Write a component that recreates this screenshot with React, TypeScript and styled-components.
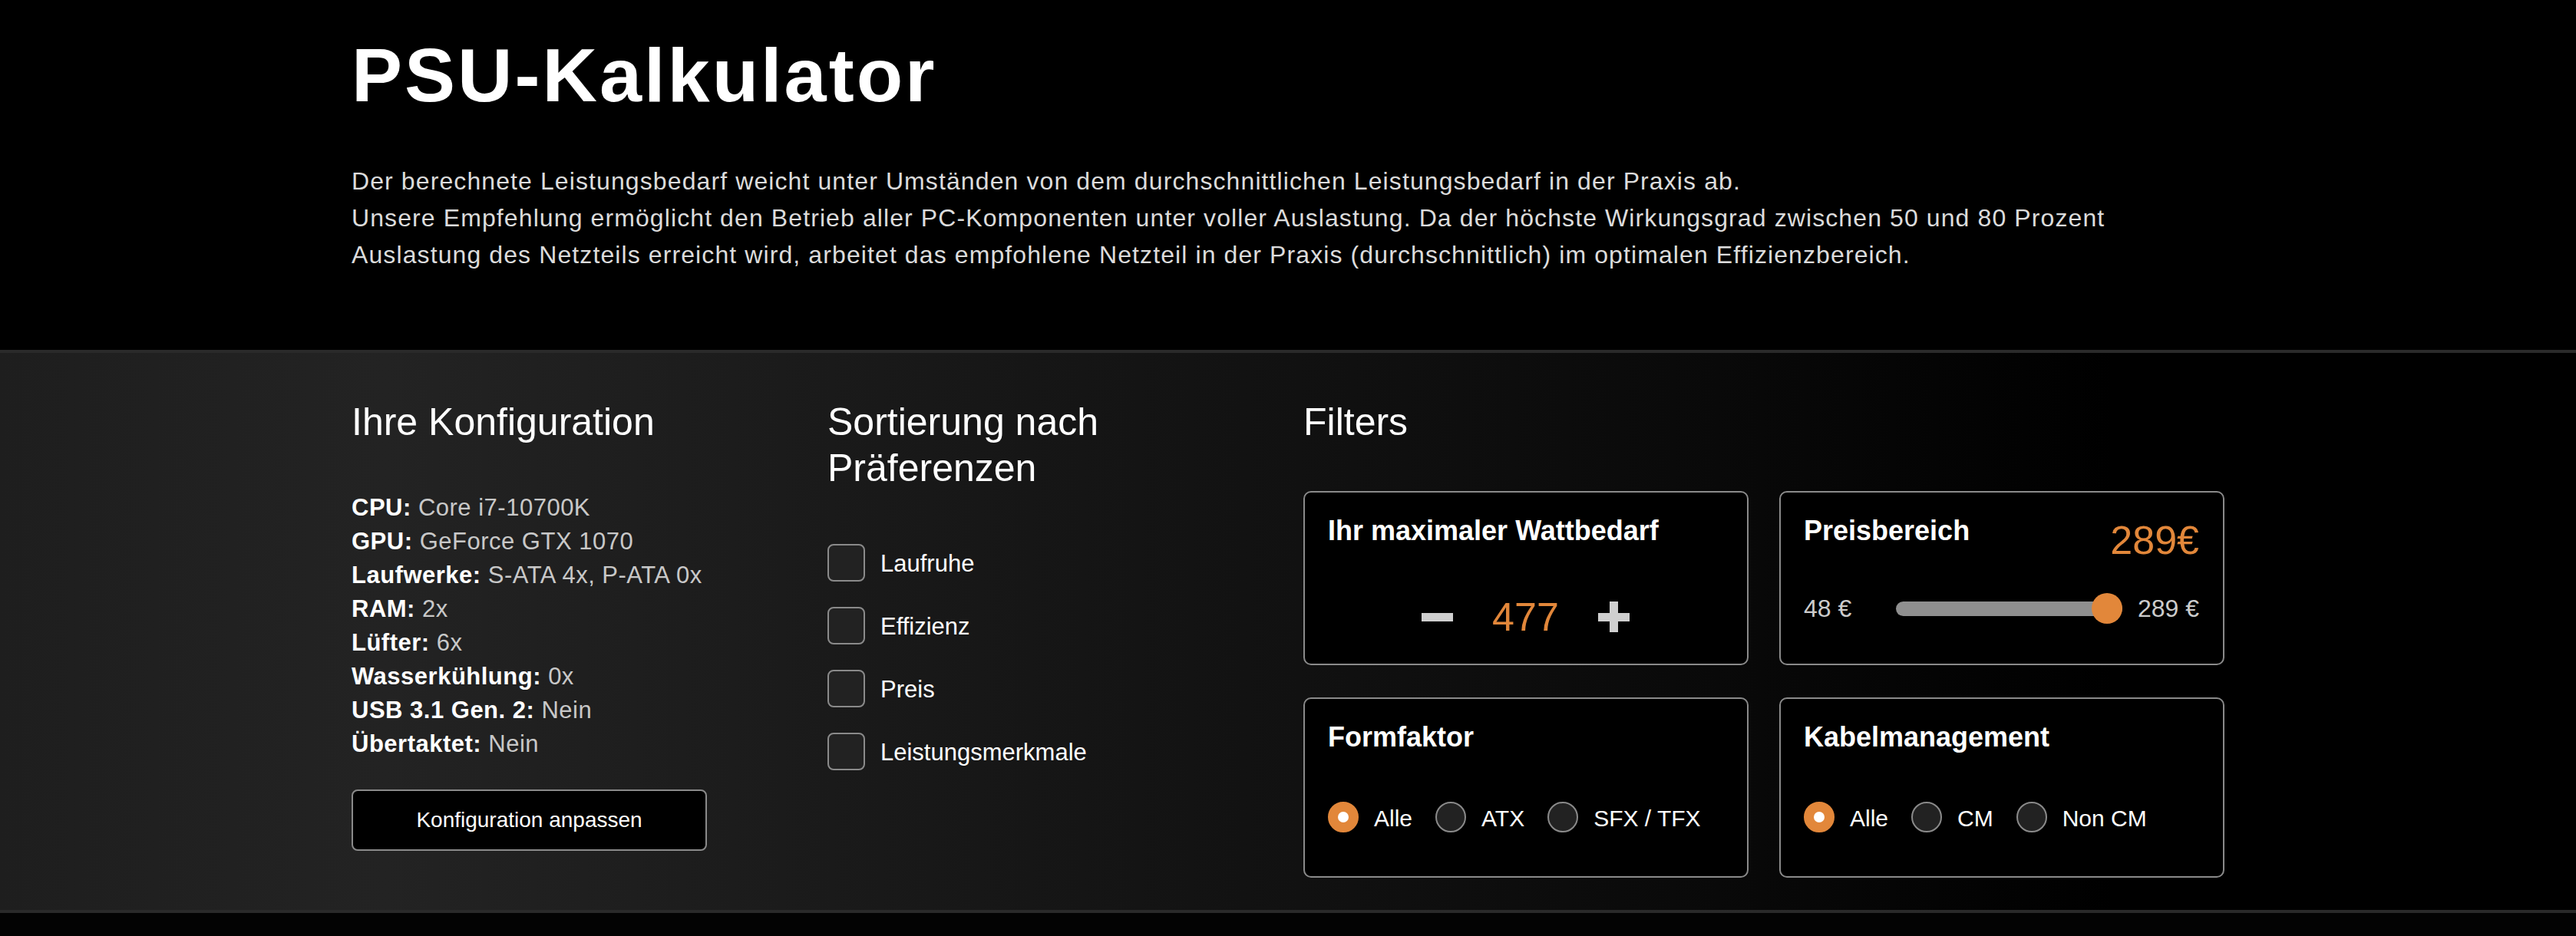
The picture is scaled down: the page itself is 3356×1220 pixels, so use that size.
import styled, { createGlobalStyle } from "styled-components";

const ORANGE = "#e2873a";

const SPECS = [
	{ label: "CPU:", value: "Core i7-10700K" },
	{ label: "GPU:", value: "GeForce GTX 1070" },
	{ label: "Laufwerke:", value: "S-ATA 4x, P-ATA 0x" },
	{ label: "RAM:", value: "2x" },
	{ label: "Lüfter:", value: "6x" },
	{ label: "Wasserkühlung:", value: "0x" },
	{ label: "USB 3.1 Gen. 2:", value: "Nein" },
	{ label: "Übertaktet:", value: "Nein" }
];

const SORT_OPTIONS = ["Laufruhe", "Effizienz", "Preis", "Leistungsmerkmale"];

interface RadioGroupProps {
	options: string[];
	selected: string;
}

function RadioGroup({ options, selected }: RadioGroupProps) {
	return (
		<RadioRow>
			{options.map((option) => (
				<RadioItem key={option}>
					<RadioDot $checked={option === selected} />
					<RadioLabel>{option}</RadioLabel>
				</RadioItem>
			))}
		</RadioRow>
	);
}

export default function App() {
	return (
		<>
			<GlobalStyle />
			<Intro>
				<Container>
					<Title>PSU-Kalkulator</Title>
					<Lead>
						Der berechnete Leistungsbedarf weicht unter Umständen von dem
						durchschnittlichen Leistungsbedarf in der Praxis ab.
						<br />
						Unsere Empfehlung ermöglicht den Betrieb aller PC-Komponenten unter
						voller Auslastung. Da der höchste Wirkungsgrad zwischen 50 und 80
						Prozent
						<br />
						Auslastung des Netzteils erreicht wird, arbeitet das empfohlene
						Netzteil in der Praxis (durchschnittlich) im optimalen
						Effizienzbereich.
					</Lead>
				</Container>
			</Intro>

			<Panel>
				<PanelGrid>
					<Column>
						<Heading>Ihre Konfiguration</Heading>
						<SpecList>
							{SPECS.map((spec) => (
								<SpecLine key={spec.label}>
									<SpecLabel>{spec.label}</SpecLabel> {spec.value}
								</SpecLine>
							))}
						</SpecList>
						<OutlineButton type="button">Konfiguration anpassen</OutlineButton>
					</Column>

					<Column>
						<Heading>Sortierung nach Präferenzen</Heading>
						<CheckList>
							{SORT_OPTIONS.map((option) => (
								<CheckRow key={option}>
									<CheckBox />
									<CheckLabel>{option}</CheckLabel>
								</CheckRow>
							))}
						</CheckList>
					</Column>

					<FilterColumn>
						<Heading>Filters</Heading>
						<CardGrid>
							<Card>
								<CardTitle>Ihr maximaler Wattbedarf</CardTitle>
								<Stepper>
									<svg width="41" height="40" viewBox="0 0 41 40">
										<rect x="0" y="15" width="41" height="11" fill="#cfcfcf" />
									</svg>
									<StepValue>477</StepValue>
									<svg width="41" height="40" viewBox="0 0 41 40">
										<rect x="0" y="15" width="41" height="11" fill="#cfcfcf" />
										<rect x="15" y="0" width="11" height="40" fill="#cfcfcf" />
									</svg>
								</Stepper>
							</Card>

							<Card>
								<CardHeader>
									<CardTitle>Preisbereich</CardTitle>
									<Price>289€</Price>
								</CardHeader>
								<SliderRow>
									<SliderValue>48 €</SliderValue>
									<Track>
										<Thumb />
									</Track>
									<SliderValue>289 €</SliderValue>
								</SliderRow>
							</Card>

							<Card>
								<CardTitle>Formfaktor</CardTitle>
								<RadioGroup options={["Alle", "ATX", "SFX / TFX"]} selected="Alle" />
							</Card>

							<Card>
								<CardTitle>Kabelmanagement</CardTitle>
								<RadioGroup options={["Alle", "CM", "Non CM"]} selected="Alle" />
							</Card>
						</CardGrid>
					</FilterColumn>
				</PanelGrid>
			</Panel>
			<PageEnd />
		</>
	);
}

const GlobalStyle = createGlobalStyle`
	body {
		margin: 0;
		background: #000;
		color: #fff;
		font-family: "Liberation Sans", Arial, sans-serif;
	}
`;

const Container = styled.div`
	width: 2440px;
	margin: 0 auto;
`;

const Intro = styled.header`
	padding: 40px 0 100px;
	background: #000;
`;

const Title = styled.h1`
	margin: 0;
	font-size: 99px;
	line-height: 115px;
	font-weight: 700;
	letter-spacing: 3px;
	color: #fff;
`;

const Lead = styled.p`
	margin: 57px 0 0;
	font-size: 32px;
	line-height: 48px;
	letter-spacing: 1.1px;
	color: #dcdcdc;
`;

const Panel = styled.section`
	border-top: 4px solid #2a2a2a;
	border-bottom: 4px solid #2a2a2a;
	background: linear-gradient(
		90deg,
		#1e1e1e 0%,
		#232323 15%,
		#161616 40%,
		#0a0a0a 65%,
		#000 82%
	);
	padding: 60px 0 42px;
`;

const PanelGrid = styled(Container)`
	display: grid;
	grid-template-columns: repeat(4, 1fr);
	column-gap: 40px;
	align-items: start;
`;

const Column = styled.div`
	display: flex;
	flex-direction: column;
	align-items: flex-start;
`;

const FilterColumn = styled(Column)`
	grid-column: span 2;
	align-items: stretch;
`;

const Heading = styled.h2`
	margin: 0 0 60px;
	font-size: 50px;
	line-height: 60px;
	font-weight: 400;
	color: #fff;
`;

const SpecList = styled.div`
	display: flex;
	flex-direction: column;
`;

const SpecLine = styled.div`
	font-size: 31px;
	line-height: 44px;
	letter-spacing: 0.5px;
	color: #c8c8c8;
`;

const SpecLabel = styled.b`
	font-weight: 700;
	color: #fff;
`;

const OutlineButton = styled.button`
	margin-top: 37px;
	width: 463px;
	height: 80px;
	background: #000;
	border: 2px solid #8a8a8a;
	border-radius: 8px;
	color: #fff;
	font-family: inherit;
	font-size: 28px;
	cursor: pointer;
`;

const CheckList = styled.div`
	margin-top: 2px;
	display: flex;
	flex-direction: column;
	gap: 20px;
`;

const CheckRow = styled.label`
	display: flex;
	align-items: center;
	min-height: 62px;
	gap: 20px;
	cursor: pointer;
`;

const CheckBox = styled.span`
	box-sizing: border-box;
	width: 49px;
	height: 49px;
	border: 2px solid #8a8a8a;
	border-radius: 8px;
	background: #222;
`;

const CheckLabel = styled.span`
	font-size: 31px;
	padding-top: 3px;
	color: #fff;
`;

const CardGrid = styled.div`
	display: grid;
	grid-template-columns: 1fr 1fr;
	column-gap: 40px;
	row-gap: 42px;
`;

const Card = styled.div`
	box-sizing: border-box;
	background: #000;
	border: 2px solid #8a8a8a;
	border-radius: 10px;
	padding: 28px 31px 31px 30px;
`;

const CardHeader = styled.div`
	display: flex;
	justify-content: space-between;
	align-items: flex-start;
`;

const CardTitle = styled.h3`
	margin: 0;
	font-size: 36px;
	line-height: 44px;
	font-weight: 700;
	color: #fff;
`;

const Price = styled.span`
	font-size: 52px;
	line-height: 68px;
	color: ${ORANGE};
`;

const Stepper = styled.div`
	margin-top: 60px;
	height: 60px;
	display: flex;
	align-items: center;
	justify-content: center;
	gap: 51px;
`;

const StepValue = styled.span`
	font-size: 52px;
	line-height: 60px;
	color: ${ORANGE};
`;

const SliderRow = styled.div`
	margin-top: 35px;
	height: 40px;
	display: flex;
	align-items: center;
`;

const SliderValue = styled.span`
	font-size: 32px;
	color: #cccccc;
`;

const Track = styled.div`
	position: relative;
	flex: 1;
	height: 19px;
	margin: 0 20px 0 58px;
	border-radius: 10px;
	background: #8f8f8f;
`;

const Thumb = styled.span`
	position: absolute;
	right: 0;
	top: 50%;
	width: 40px;
	height: 40px;
	margin-top: -20px;
	border-radius: 50%;
	background: ${ORANGE};
`;

const RadioRow = styled.div`
	display: flex;
	align-items: center;
	gap: 30px;
	margin: 62px 0 26px;
	height: 40px;
`;

const RadioItem = styled.label`
	display: flex;
	align-items: center;
	gap: 20px;
	cursor: pointer;
`;

const RadioDot = styled.span<{ $checked: boolean }>`
	box-sizing: border-box;
	width: 40px;
	height: 40px;
	border-radius: 50%;
	display: flex;
	align-items: center;
	justify-content: center;
	background: ${(p) => (p.$checked ? ORANGE : "#222")};
	border: 2px solid ${(p) => (p.$checked ? ORANGE : "#8a8a8a")};

	&::after {
		content: "";
		display: ${(p) => (p.$checked ? "block" : "none")};
		width: 14px;
		height: 14px;
		border-radius: 50%;
		background: #fff;
	}
`;

const RadioLabel = styled.span`
	font-size: 30px;
	padding-top: 3px;
	color: #fff;
`;

const PageEnd = styled.div`
	height: 32px;
	background: #030303;
`;
